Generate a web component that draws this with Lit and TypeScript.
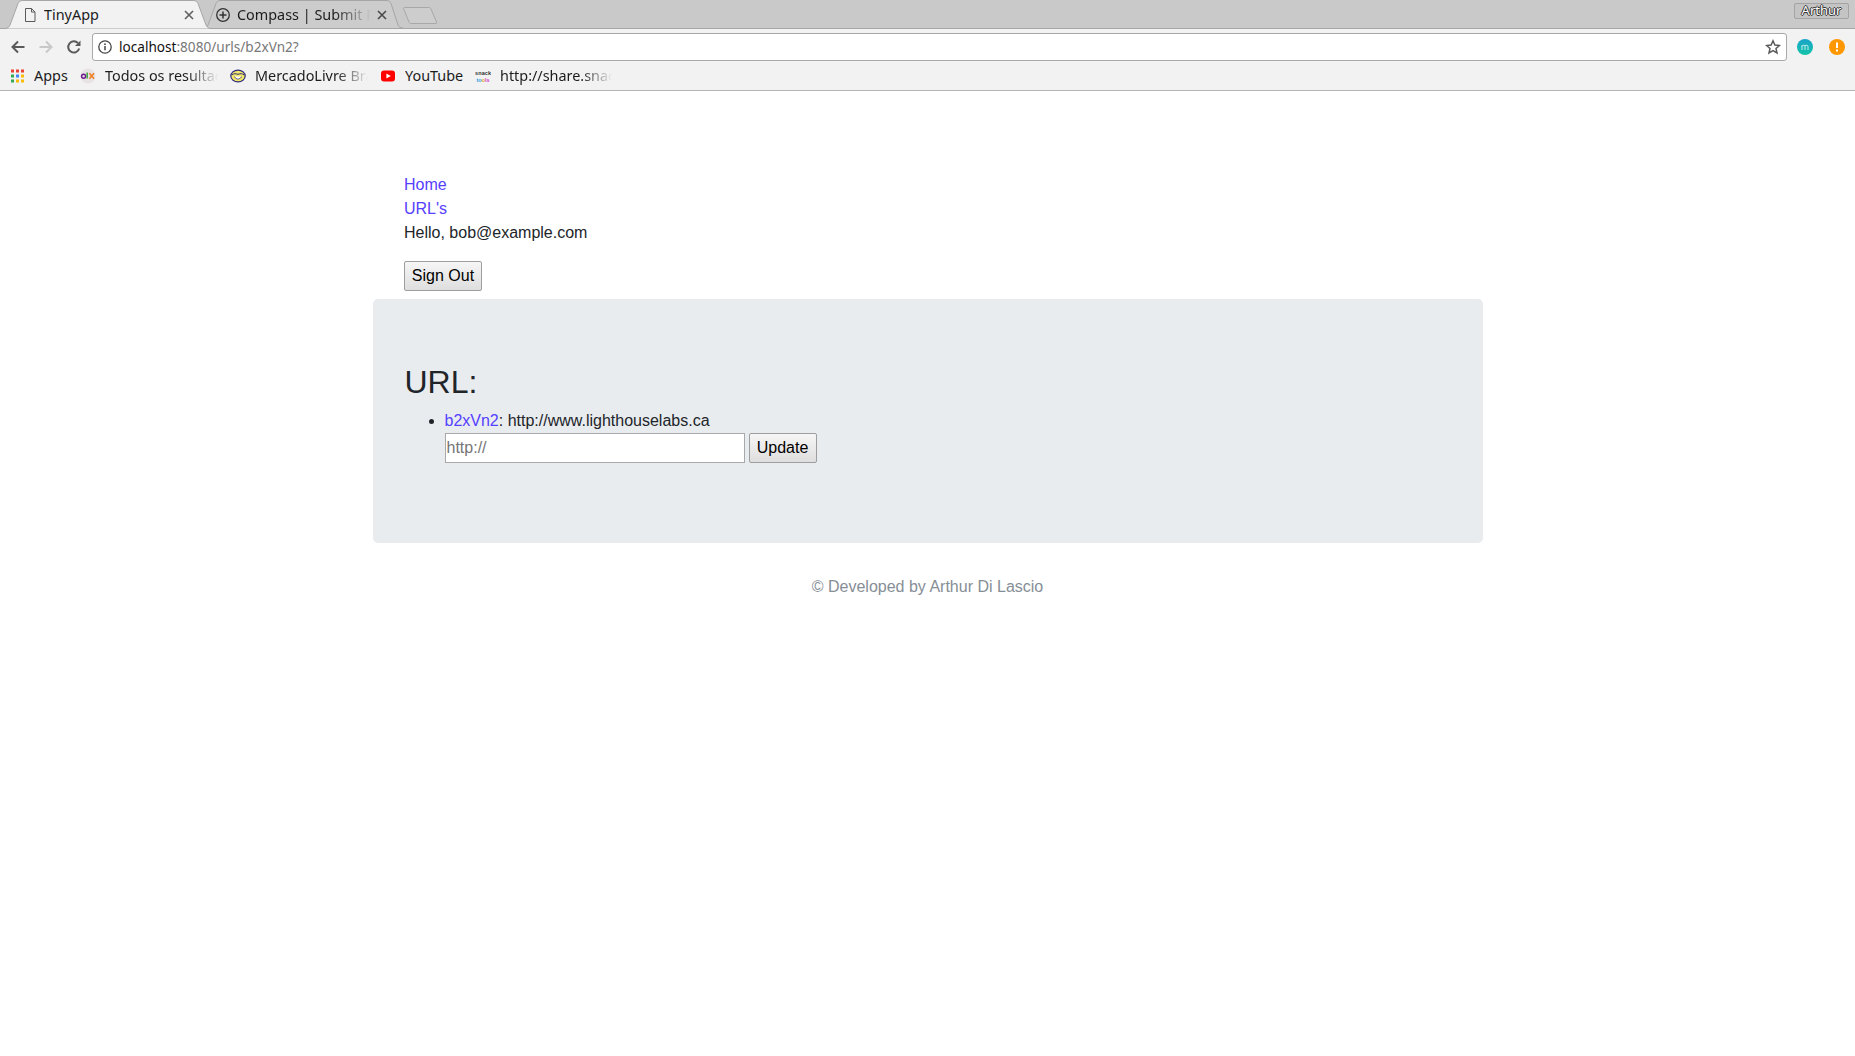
import { LitElement, css, html, svg } from "lit";
import { customElement } from "lit/decorators.js";

const bookmarks = [
  {
    label: "Apps",
    width: 34,
    fade: false,
    gap: 12,
    icon: svg`<g>
      <rect x="2" y="1.500" width="3" height="3" fill="#ea4335"/><rect x="7" y="1.500" width="3" height="3" fill="#ea4335"/><rect x="12" y="1.500" width="3" height="3" fill="#ea4335"/>
      <rect x="2" y="6.500" width="3" height="3" fill="#34a853"/><rect x="7" y="6.500" width="3" height="3" fill="#4285f4"/><rect x="12" y="6.500" width="3" height="3" fill="#fbbc05"/>
      <rect x="2" y="11.500" width="3" height="3" fill="#34a853"/><rect x="7" y="11.500" width="3" height="3" fill="#fbbc05"/><rect x="12" y="11.500" width="3" height="3" fill="#fbbc05"/>
    </g>`,
  },
  {
    label: "Todos os resultados",
    width: 113,
    fade: true,
    gap: 12,
    icon: svg`<g>
      <circle cx="8" cy="8" r="7.500" fill="#e6e2e6"/>
      <circle cx="3.600" cy="8.200" r="2" fill="none" stroke="#6e1a8e" stroke-width="1.500"/>
      <path d="M7.200 4.500v6" stroke="#3aa63a" stroke-width="1.500"/>
      <path d="M9.400 5.200l4.600 5.600M14 5.200l-4.600 5.600" stroke="#f08020" stroke-width="1.600"/>
    </g>`,
  },
  {
    label: "MercadoLivre Brasil",
    width: 113,
    fade: true,
    gap: 12,
    icon: svg`<g>
      <ellipse cx="8" cy="8" rx="7.800" ry="6.400" fill="#2d2a7a"/>
      <ellipse cx="8" cy="8" rx="6.600" ry="5.200" fill="#f3e76a"/>
      <path d="M1.800 7c2-1.600 4-1.600 6.200-.6 2.200-1 4.200-1 6.200.6" fill="none" stroke="#2d2a7a" stroke-width="1"/>
      <path d="M4 8.600l3 2.400h2l3-2.400" fill="#fff" stroke="#2d2a7a" stroke-width=".7"/>
    </g>`,
  },
  {
    label: "YouTube",
    width: 59,
    fade: false,
    gap: 11,
    icon: svg`<g>
      <rect x="1" y="2.500" width="14" height="11" rx="3" fill="#f00"/>
      <path d="M6.400 5.400v5.200L10.800 8z" fill="#fff"/>
    </g>`,
  },
  {
    label: "http://share.snacktools.com",
    width: 112,
    fade: true,
    gap: 0,
    icon: svg`<g font-family="Liberation Sans, sans-serif" font-weight="700" font-size="5.500">
      <text x="0" y="6.500" fill="#333" textLength="16">snack</text>
      <text x="1.500" y="13.500" textLength="13"><tspan fill="#2f9be0">to</tspan><tspan fill="#e8a020">o</tspan><tspan fill="#d33cc8">ls</tspan></text>
    </g>`,
  },
];

@customElement("app-root")
export class AppRoot extends LitElement {
  static styles = css`
    :host {
      display: block;
      min-height: 1056px;
      background: #fff;
      color: #212529;
      font-family: "Liberation Sans", Arial, sans-serif;
      font-size: 16px;
      line-height: 24px;
    }

    .chrome {
      font-family: "Noto Sans", sans-serif;
      font-size: 14.400px;
      color: #1c1c1c;
      line-height: 18px;
    }

    .strip {
      position: relative;
      display: flex;
      height: 28px;
      padding-left: 5px;
      background: #c9c9c9;
      border-bottom: 1px solid #a6a6a6;
    }

    .tab {
      position: relative;
      display: flex;
      align-items: center;
      height: 29px;
      box-sizing: border-box;
    }

    .tab > * {
      position: relative;
    }

    .tab > svg.shape {
      position: absolute;
      left: 0;
      top: 0;
    }

    .tab.active {
      width: 206px;
      padding: 0 17px 0 18px;
      z-index: 2;
    }

    .tab.other {
      width: 200px;
      margin-left: -8px;
      padding: 0 16px 0 12px;
    }

    .title {
      flex: 1;
      margin-left: 7px;
      white-space: nowrap;
      overflow: hidden;
    }

    .tab.other .title {
      margin: 0 6px 0 6px;
    }

    .fade {
      -webkit-mask-image: linear-gradient(to right, #000 72%, transparent 100%);
      mask-image: linear-gradient(to right, #000 72%, transparent 100%);
    }

    .newtab {
      margin: 7px 0 0 -1px;
    }

    .profile {
      position: absolute;
      right: 6px;
      top: 3px;
      width: 55px;
      height: 16px;
      box-sizing: border-box;
      border: 1px solid #a4a4a4;
      border-radius: 2px;
      background: #c4c4c4;
      color: #fff;
      font-size: 13px;
      line-height: 13px;
      text-align: center;
      text-shadow: -1px 0 #333, 1px 0 #333, 0 -1px #333, 0 1px #333;
    }

    .toolbar {
      display: flex;
      align-items: center;
      height: 32px;
      padding-top: 4px;
      box-sizing: border-box;
      background: #f2f2f2;
    }

    .nav-icons {
      display: flex;
      width: 92px;
      padding-left: 10px;
      box-sizing: border-box;
      gap: 12px;
    }

    .omnibox {
      display: flex;
      align-items: center;
      width: 1695px;
      height: 28px;
      box-sizing: border-box;
      padding: 0 5px 0 5px;
      background: #fff;
      border: 1px solid #a9a9a9;
      border-radius: 3px;
      font-size: 13.600px;
    }

    .url {
      flex: 1;
      margin-left: 7px;
      color: #777;
    }

    .url b {
      font-weight: 400;
      color: #111;
    }

    .extensions {
      display: flex;
      gap: 16px;
      margin-left: 10px;
    }

    .bookmarks {
      display: flex;
      align-items: center;
      height: 30px;
      padding-left: 9px;
      box-sizing: border-box;
      background: #f2f2f2;
      border-bottom: 1px solid #b4b4b4;
    }

    .bookmark {
      display: flex;
      align-items: center;
      gap: 9px;
      white-space: nowrap;
    }

    .bookmark .label {
      overflow: hidden;
    }

    .page {
      width: 1110px;
      margin: 0 auto;
    }

    .nav {
      padding: 82px 32px 8px 31.500px;
    }

    .nav a {
      display: block;
    }

    a {
      color: #5540ff;
      text-decoration: none;
    }

    form {
      margin: 0;
    }

    .signout {
      margin-top: 16px;
    }

    .signout button {
      width: 78px;
    }

    button {
      height: 30px;
      padding: 0 6px;
      box-sizing: border-box;
      font: 16px "Liberation Sans", Arial, sans-serif;
      color: #000;
      background: linear-gradient(#f6f6f6, #dedede);
      border: 1px solid #9e9e9e;
      border-radius: 2px;
    }

    .jumbotron {
      padding: 64px 32px;
      background: #e9ecef;
      border-radius: 4.800px;
      margin-bottom: 32px;
    }

    h2 {
      margin: 0 0 8px;
      font-size: 32px;
      font-weight: 500;
      line-height: 38.400px;
    }

    ul {
      margin: 0 0 16px;
      padding-left: 40px;
    }

    .update {
      display: flex;
      gap: 4px;
    }

    input {
      width: 300px;
      height: 30px;
      box-sizing: border-box;
      padding: 1px;
      font: 16px "Liberation Sans", Arial, sans-serif;
      background: #fff;
      border: 1px solid #a9a9a9;
      outline: none;
    }

    input::placeholder {
      color: #757575;
    }

    .update button {
      width: 68px;
    }

    footer {
      text-align: center;
      color: #868e96;
    }
  `;

  render() {
    return html`
      <div class="chrome">
        <div class="strip">
          <div class="tab active">
            <svg class="shape" width="206" height="29">
              <path d="M0 28.500C3 28.500 4 27 5 25L13 3.500C14 1.500 15 .5 18 .5H188C191 .5 192 1.500 193 3.500L201 25C202 27 203 28.500 206 28.500V29H0z" fill="#f2f2f2" stroke="#a6a6a6"/>
            </svg>
            <svg width="14" height="16" viewBox="0 0 14 16"><path d="M2.500 1.500H8.500L12 5V14.500H2.500zM8.500 1.500V5H12" fill="none" stroke="#5a5a5a"/></svg>
            <span class="title">TinyApp</span>
            <svg width="10" height="10" viewBox="0 0 10 10"><path d="M1 1l8 8M9 1l-8 8" stroke="#5f5f5f" stroke-width="1.600"/></svg>
          </div>
          <div class="tab other">
            <svg class="shape" width="200" height="29">
              <path d="M0 28C3 28 4 27 5 25L13 3.500C14 1.500 15 .5 18 .5H183C186 .5 187 1.500 188 3.500L195 25C196 27 197 28 200 28" fill="#cccccc" stroke="#a6a6a6"/>
            </svg>
            <svg width="16" height="16" viewBox="0 0 16 16"><circle cx="8" cy="8" r="6.300" fill="none" stroke="#333" stroke-width="1.300"/><path d="M8 4.500v7M4.500 8h7" stroke="#333" stroke-width="1.500"/></svg>
            <span class="title fade">Compass | Submit Projects</span>
            <svg width="10" height="10" viewBox="0 0 10 10"><path d="M1 1l8 8M9 1l-8 8" stroke="#4a4a4a" stroke-width="1.600"/></svg>
          </div>
          <svg class="newtab" width="36" height="18" viewBox="0 0 36 18">
            <path d="M2.500 .5H27C28 .5 28.500 1 29 2L34.500 15C35 16.500 34.500 16.500 33 16.500H9C8 16.500 7.500 16 7 15L1.500 1.500C1.300 .8 1.700 .5 2.500 .5z" fill="#cdcdcd" stroke="#a8a8a8"/>
          </svg>
          <div class="profile">Arthur</div>
        </div>

        <div class="toolbar">
          <div class="nav-icons">
            <svg width="16" height="16" viewBox="0 0 16 16"><path d="M14.500 8H2.500M8 2.500L2.500 8 8 13.500" fill="none" stroke="#5a5a5a" stroke-width="2"/></svg>
            <svg width="16" height="16" viewBox="0 0 16 16"><path d="M1.500 8H13.500M8 2.500L13.500 8 8 13.500" fill="none" stroke="#c8c8c8" stroke-width="2"/></svg>
            <svg width="16" height="16" viewBox="0 0 16 16"><path d="M13.200 9.500A5.600 5.600 0 1 1 12 4.200" fill="none" stroke="#5a5a5a" stroke-width="2"/><path d="M14.500 1.500V7H9z" fill="#5a5a5a"/></svg>
          </div>
          <div class="omnibox">
            <svg width="14" height="14" viewBox="0 0 14 14"><circle cx="7" cy="7" r="6.200" fill="none" stroke="#444" stroke-width="1.300"/><path d="M7 6v4.200" stroke="#444" stroke-width="1.500"/><circle cx="7" cy="4.200" r=".9" fill="#444"/></svg>
            <span class="url"><b>localhost</b>:8080/urls/b2xVn2?</span>
            <svg width="16" height="16" viewBox="0 0 16 16"><path d="M8 1.800l1.900 4.200 4.500.5-3.400 3 1 4.500L8 11.700 4 14l1-4.500-3.400-3 4.500-.5z" fill="none" stroke="#5a5a5a" stroke-width="1.500"/></svg>
          </div>
          <div class="extensions">
            <svg width="16" height="16" viewBox="0 0 16 16">
              <defs><linearGradient id="mg" x1="0" y1="0" x2="0" y2="1"><stop offset="0" stop-color="#1aa3c8"/><stop offset="1" stop-color="#12c4a8"/></linearGradient></defs>
              <circle cx="8" cy="8" r="8" fill="url(#mg)"/>
              <path d="M5 11V6.500M8 11V6.500M11 11V7.500C11 6 9 5.800 8 7 7 5.800 5 6 5 7.500" fill="none" stroke="#d8f5f2" stroke-width=".9"/>
            </svg>
            <svg width="16" height="16" viewBox="0 0 16 16">
              <circle cx="8" cy="8" r="8" fill="#ff9800"/>
              <path d="M8 3.500v5.500" stroke="#fff" stroke-width="2"/><rect x="7" y="10.500" width="2" height="2" fill="#fff"/>
            </svg>
          </div>
        </div>

        <div class="bookmarks">
          ${bookmarks.map(
            (b) => html`
              <div class="bookmark" style="margin-right:${b.gap}px">
                <svg width="16" height="16" viewBox="0 0 16 16">${b.icon}</svg>
                <span class="label ${b.fade ? "fade" : ""}" style="width:${b.width}px">${b.label}</span>
              </div>
            `,
          )}
        </div>
      </div>

      <div class="page">
        <div class="nav">
          <a href="#">Home</a>
          <a href="#">URL's</a>
          <div>Hello, bob@example.com</div>
          <form class="signout"><button type="button">Sign Out</button></form>
        </div>

        <div class="jumbotron">
          <h2>URL:</h2>
          <ul>
            <li>
              <a href="#">b2xVn2</a>: http://www.lighthouselabs.ca
              <form class="update">
                <input type="text" placeholder="http://" />
                <button type="button">Update</button>
              </form>
            </li>
          </ul>
        </div>

        <footer>© Developed by Arthur Di Lascio</footer>
      </div>
    `;
  }
}
